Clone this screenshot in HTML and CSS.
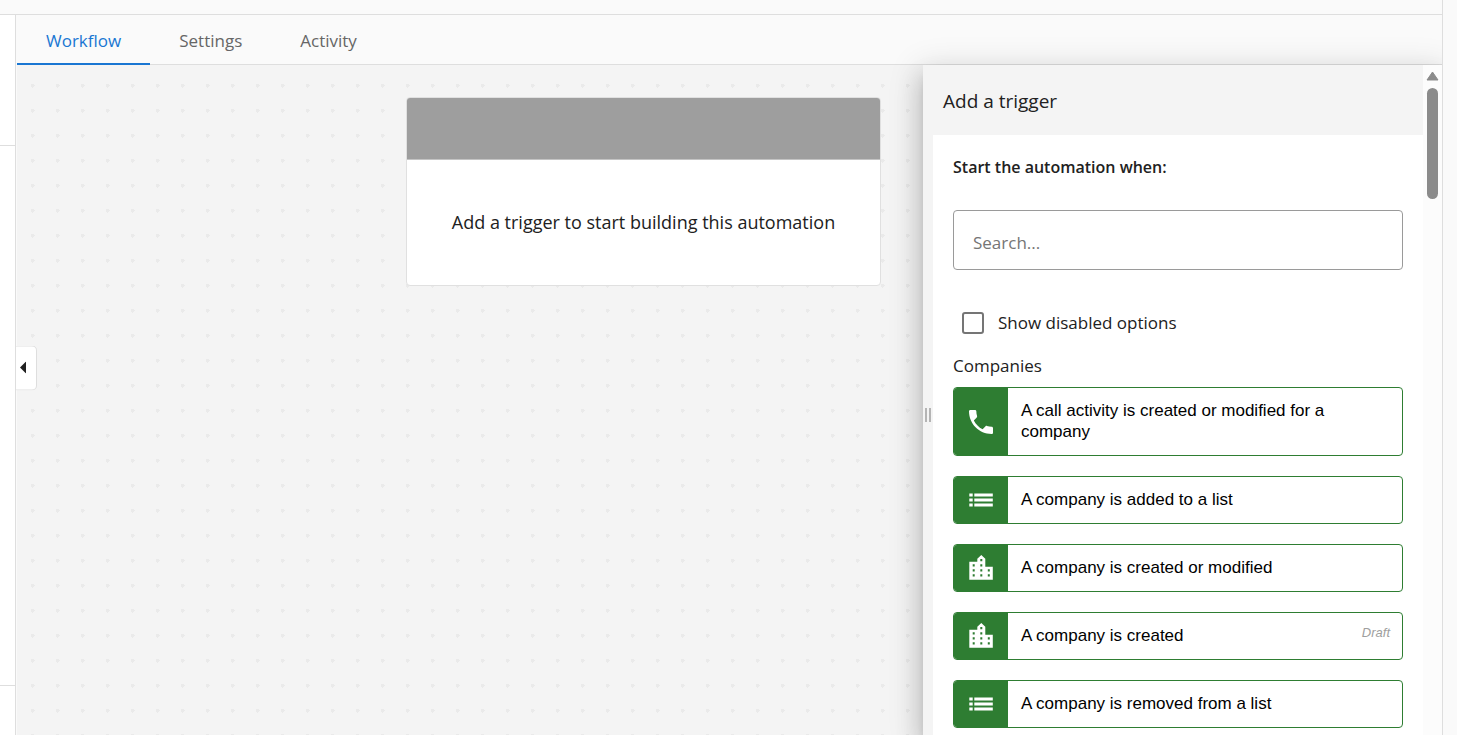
FILE: index.html
```html
<!DOCTYPE html>
<html lang="en">
<head>
<meta charset="utf-8">
<meta name="viewport" content="width=device-width, initial-scale=1">
<title>Workflow</title>
<link rel="stylesheet" href="styles.css">
</head>
<body>
<svg class="sprite" aria-hidden="true">
  <symbol id="phone" viewBox="3 3 18 18"><path d="M6.62 10.79c1.44 2.83 3.76 5.14 6.59 6.59l2.2-2.2c.27-.27.67-.36 1.02-.24 1.12.37 2.33.57 3.57.57.55 0 1 .45 1 1V20c0 .55-.45 1-1 1-9.39 0-17-7.61-17-17 0-.55.45-1 1-1h3.5c.55 0 1 .45 1 1 0 1.25.2 2.45.57 3.57.11.35.03.74-.25 1.02l-2.2 2.2z"/></symbol>
  <symbol id="list" viewBox="0 0 24 26"><path d="M.3 6.4h3.4v3.2H.3zM.3 11.4h3.4v3.2H.3zM.3 16.4h3.4v3.2H.3zM5.3 6.4h18.5v3.2H5.3zM5.3 11.4h18.5v3.2H5.3zM5.3 16.4h18.5v3.2H5.3z"/></symbol>
  <symbol id="city" viewBox="0 0 24 26"><path fill-rule="evenodd" d="M.3 24.7V6.7h8v-3l4-3.7 4 3.7v8h7.5v13zM11.3 4v2.2h2V4zM3.7 9.2v2.2h2V9.2zM11.3 9.2v2.2h2V9.2zM3.7 14.2v2.2h2v-2.2zM11.3 14.2v2.2h2v-2.2zM18.8 14.2v2.2h2v-2.2zM3.7 19.2v2.2h2v-2.2zM11.3 19.2v2.2h2v-2.2zM18.8 19.2v2.2h2v-2.2z"/></symbol>
</svg>
<div class="app">
  <div class="frame">
    <div class="topbar"></div>
    <div class="body">
      <aside class="rail">
        <div class="rail-top"></div>
        <div class="rail-middle"></div>
      </aside>
      <main class="main">
        <nav class="tabs">
          <a class="tab tab-active" href="#workflow">Workflow</a>
          <a class="tab" href="#settings">Settings</a>
          <a class="tab" href="#activity">Activity</a>
        </nav>
        <div class="workspace">
          <section class="canvas">
            <article class="card">
              <div class="card-head"></div>
              <p class="card-text">Add a trigger to start building this automation</p>
            </article>
          </section>
          <aside class="drawer">
            <div class="panel">
              <h2 class="panel-title">Add a trigger</h2>
              <div class="panel-row">
                <div class="grip"><span class="grip-line"></span><span class="grip-line"></span></div>
                <div class="content">
                  <h3 class="lead">Start the automation when:</h3>
                  <input class="search" type="text" placeholder="Search..." aria-label="Search triggers">
                  <label class="check"><input class="check-box" type="checkbox">Show disabled options</label>
                  <h4 class="group">Companies</h4>
                  <div class="options">
                    <button class="option" type="button"><span class="option-icon"><svg class="icon icon-phone"><use href="#phone"/></svg></span><span class="option-text">A call activity is created or modified for a company</span></button>
                    <button class="option" type="button"><span class="option-icon"><svg class="icon"><use href="#list"/></svg></span><span class="option-text">A company is added to a list</span></button>
                    <button class="option" type="button"><span class="option-icon"><svg class="icon"><use href="#city"/></svg></span><span class="option-text">A company is created or modified</span></button>
                    <button class="option" type="button"><span class="option-icon"><svg class="icon"><use href="#city"/></svg></span><span class="option-text">A company is created</span><em class="draft">Draft</em></button>
                    <button class="option" type="button"><span class="option-icon"><svg class="icon"><use href="#list"/></svg></span><span class="option-text">A company is removed from a list</span></button>
                  </div>
                </div>
              </div>
            </div>
            <div class="scrollbar">
              <svg class="scroll-arrow" viewBox="0 0 13 10"><path d="M6.5 1 12 9H1Z"/></svg>
              <div class="scroll-thumb"></div>
            </div>
          </aside>
        </div>
      </main>
    </div>
  </div>
  <button class="collapse" type="button" aria-label="Collapse sidebar"><svg class="collapse-arrow" viewBox="0 0 6 12"><path d="M6 0v12L0 6Z"/></svg></button>
</div>
</body>
</html>
```
FILE: styles.css
```css
* { box-sizing: border-box; }

body {
  margin: 0;
  background: #fafafa;
  color: #212121;
  font-family: "Open Sans", "Noto Sans", sans-serif;
  font-size: 17px;
  line-height: 24px;
}

h2, h3, h4, p { margin: 0; font-weight: 400; }

.sprite { display: none; }

.app {
  position: relative;
  height: 100vh;
  padding-right: 14px;
  overflow: hidden;
}

.frame {
  display: flex;
  flex-direction: column;
  height: 100%;
  border-right: 1px solid #dedede;
}

.topbar {
  flex: 0 0 15px;
  border-bottom: 1px solid #dedede;
}

.body {
  display: flex;
  flex: 1;
  min-height: 0;
}

.rail {
  flex: 0 0 16px;
  background: #fff;
  border-right: 1px solid #dedede;
}

.rail-top {
  height: 131px;
  border-bottom: 1px solid #dedede;
}

.rail-middle {
  height: 540px;
  border-bottom: 1px solid #dedede;
}

.main {
  display: flex;
  flex: 1;
  flex-direction: column;
  min-width: 0;
  padding-left: 1px;
  overflow: hidden;
}

.tabs {
  display: flex;
  flex: none;
  height: 50px;
  border-bottom: 1px solid #dedede;
}

.tab {
  height: 50px;
  padding: 14px 29px 10px;
  border-bottom: 2px solid transparent;
  color: #666;
  text-decoration: none;
}

.tab-active {
  border-bottom-color: #1976d2;
  color: #1976d2;
}

.workspace {
  display: flex;
  flex: 1;
  min-height: 0;
}

.canvas {
  position: relative;
  flex: 1;
  background: radial-gradient(circle, #eaeaea 2px, transparent 2px) 3px 8px / 25px 25px #f4f4f4;
}

.card {
  position: absolute;
  top: 32px;
  left: 389px;
  width: 475px;
  border: 1px solid #e0e0e0;
  border-radius: 4px;
  background: #fff;
  overflow: hidden;
}

.card-head {
  height: 62px;
  border-bottom: 1px solid #c4c4c4;
  background: #9e9e9e;
}

.card-text {
  padding: 50px 16px 51px;
  font-size: 18px;
  text-align: center;
}

.drawer {
  position: relative;
  display: flex;
  flex: 0 0 519px;
  background: #f4f4f4;
  box-shadow: 0 8px 10px -5px rgba(0, 0, 0, .2), 0 16px 24px 2px rgba(0, 0, 0, .14), 0 6px 30px 5px rgba(0, 0, 0, .12);
}

.panel {
  display: flex;
  flex: 1;
  flex-direction: column;
  min-width: 0;
  overflow: hidden;
}

.panel-title {
  padding: 24px 20px 22px;
  font-size: 19px;
}

.panel-row {
  display: flex;
  flex: 1;
  min-height: 0;
}

.grip {
  display: flex;
  flex: 0 0 10px;
  gap: 2px;
  justify-content: center;
  align-items: flex-start;
  padding-top: 273px;
}

.grip-line {
  width: 2px;
  height: 14px;
  background: #b4b4b4;
}

.content {
  flex: 1;
  min-width: 0;
  padding: 20px;
  background: #fff;
}

.lead {
  font-size: 16px;
  font-weight: 600;
}

.search {
  display: block;
  width: 100%;
  height: 60px;
  margin-top: 31px;
  padding: 4px 19px 0;
  border: 1px solid #9a9a9a;
  border-radius: 4px;
  background: #fff;
  font: inherit;
}

.search::placeholder { color: #757575; opacity: 1; }

.check {
  display: flex;
  gap: 14px;
  align-items: center;
  margin-top: 41px;
  padding-left: 9px;
}

.check-box {
  width: 22px;
  height: 22px;
  margin: 0;
  border: 2px solid #757575;
  border-radius: 3px;
  appearance: none;
}

.check-box:checked { background: #1976d2; }

.group {
  margin-top: 19px;
  font-size: 17px;
}

.options {
  display: grid;
  gap: 20px;
  margin-top: 9px;
}

.option {
  display: flex;
  width: 100%;
  min-height: 48px;
  padding: 0;
  border: 1px solid #2e7d32;
  border-radius: 4px;
  background: #fff;
  color: #000;
  font: 17px/21px "Liberation Sans", Arial, sans-serif;
  text-align: left;
  overflow: hidden;
}

.option-icon {
  display: flex;
  flex: 0 0 54px;
  align-items: center;
  align-self: stretch;
  justify-content: center;
  background: #2e7d32;
}

.icon {
  width: 24px;
  height: 26px;
  fill: #fff;
}

.icon-phone { height: 24px; }

.option-text {
  flex: 1;
  align-self: center;
  padding: 12px 13px 13px;
}

.draft {
  padding: 9px 12px;
  color: #9e9e9e;
  font-size: 13px;
}

.scrollbar {
  display: flex;
  flex: 0 0 19px;
  flex-direction: column;
  gap: 7px;
  align-items: center;
  padding-top: 6px;
  background: #fcfcfc;
}

.scroll-arrow {
  width: 13px;
  height: 10px;
  fill: #8b8b8b;
  stroke: #8b8b8b;
  stroke-linejoin: round;
}

.scroll-thumb {
  width: 11px;
  height: 111px;
  border-radius: 6px;
  background: #8b8b8b;
}

.collapse {
  position: absolute;
  top: 50%;
  left: 16px;
  display: flex;
  align-items: center;
  width: 21px;
  height: 45px;
  padding: 0 0 0 4px;
  border: 1px solid #dedede;
  border-left: 0;
  border-radius: 0 5px 5px 0;
  background: #fff;
  transform: translateY(-50%);
}

.collapse-arrow {
  width: 6px;
  height: 12px;
  fill: #212121;
}
```
